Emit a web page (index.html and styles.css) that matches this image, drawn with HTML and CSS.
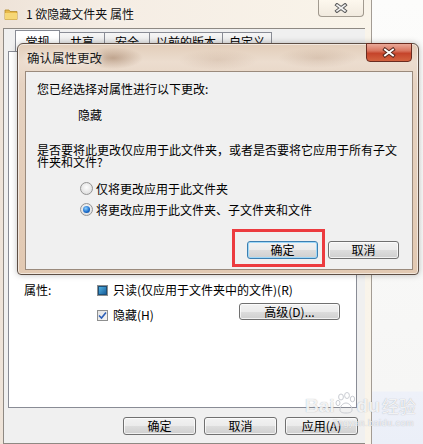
FILE: index.html
```html
<!DOCTYPE html>
<html lang="zh-CN">
<head>
    <meta charset="UTF-8">
    <title>确认属性更改</title>
    <link rel="stylesheet" href="styles.css">
</head>
<body>
<div class="desktop">

    <!-- background window: folder properties -->
    <div class="window props">
        <div class="titlebar">
            <svg class="folder-icon" width="14" height="14" viewBox="0 0 14 14">
                <path d="M1 3h4l1 1.5h7v8H1z" fill="#e8b948" stroke="#b48a2a" stroke-width="0.8"/>
                <path d="M1 6h12v6.5H1z" fill="#f6d776"/>
            </svg>
            <span class="title">1 欲隐藏文件夹 属性</span>
            <div class="close-btn">
                <svg width="14" height="10" viewBox="0 0 14 10">
                    <path d="M3 2L11 8M11 2L3 8" stroke="#5c5c5c" stroke-width="3.6" stroke-linecap="square"/>
                    <path d="M3 2L11 8M11 2L3 8" stroke="#f4f4f4" stroke-width="1.6" stroke-linecap="square"/>
                </svg>
            </div>
        </div>
        <div class="client">
            <div class="tabs">
                <div class="tab active">常规</div>
                <div class="tab">共享</div>
                <div class="tab">安全</div>
                <div class="tab wide">以前的版本</div>
                <div class="tab">自定义</div>
            </div>
            <div class="tab-panel">
                <div class="attr">
                    <span class="attr-label">属性:</span>
                    <div class="attr-opts">
                        <div class="check-row">
                            <span class="box partial"></span>
                            <span>只读(仅应用于文件夹中的文件)(R)</span>
                        </div>
                        <div class="check-row second">
                            <div class="check-item">
                                <span class="box checked">
                                    <svg width="9" height="9" viewBox="0 0 9 9"><path d="M1 4.5L3.5 7L8 1.5" fill="none" stroke="#2c5fb8" stroke-width="1.6"/></svg>
                                </span>
                                <span>隐藏(H)</span>
                            </div>
                            <button class="btn adv">高级(D)...</button>
                        </div>
                    </div>
                </div>
            </div>
            <div class="footer">
                <button class="btn">确定</button>
                <button class="btn">取消</button>
                <button class="btn">应用(A)</button>
            </div>
        </div>
    </div>

    <!-- confirm dialog -->
    <div class="window dialog">
        <div class="titlebar">
            <span class="title">确认属性更改</span>
            <div class="close-btn red">
                <svg width="16" height="11" viewBox="0 0 16 11">
                    <path d="M4 2.5L12 8.5M12 2.5L4 8.5" stroke="#5a2a20" stroke-width="3.8" stroke-linecap="square"/>
                    <path d="M4 2.5L12 8.5M12 2.5L4 8.5" stroke="#ffffff" stroke-width="1.8" stroke-linecap="square"/>
                </svg>
            </div>
        </div>
        <div class="dlg-client">
            <p class="line first">您已经选择对属性进行以下更改:</p>
            <p class="line change">隐藏</p>
            <p class="question">是否要将此更改仅应用于此文件夹，或者是否要将它应用于所有子文件夹和文件?</p>
            <div class="radio-row first">
                <span class="radio"></span>
                <span>仅将更改应用于此文件夹</span>
            </div>
            <div class="radio-row">
                <span class="radio on"></span>
                <span>将更改应用于此文件夹、子文件夹和文件</span>
            </div>
            <div class="dlg-buttons">
                <button class="btn default">确定</button>
                <button class="btn">取消</button>
            </div>
        </div>
    </div>

    <div class="highlight"></div>

    <div class="watermark">
        <div class="wm-logo">
            <span>Bai</span>
            <svg width="22" height="22" viewBox="0 0 22 22">
                <g fill="none" stroke="#c9ccd2" stroke-width="1">
                    <ellipse cx="6" cy="5" rx="2.4" ry="3"/>
                    <ellipse cx="12" cy="3.5" rx="2.4" ry="3"/>
                    <ellipse cx="17.5" cy="7" rx="2.2" ry="2.8"/>
                    <ellipse cx="3" cy="11" rx="2" ry="2.6"/>
                    <path d="M5 18c0-4 3-7 6-7s6 3 6 7c0 2-2 3-6 3s-6-1-6-3z"/>
                </g>
            </svg>
            <span>du</span>
            <span class="wm-cn">经验</span>
        </div>
        <div class="wm-url">jingyan.baidu.com</div>
    </div>

</div>
</body>
</html>
```

FILE: styles.css
```css
* { box-sizing: border-box; }
body {
    margin: 0;
    font-family: "Noto Sans CJK SC", "Noto Sans", sans-serif;
    font-size: 12px;
    color: #000;
}
p { margin: 0; }
.desktop {
    position: relative;
    width: 423px;
    height: 444px;
    overflow: hidden;
    background: linear-gradient(#fcfcfb 0, #f6f6f5 391px, #eef1f9 392px, #ebeff8 100%);
}

/* windows */
.window { position: absolute; }
.titlebar { display: flex; align-items: center; }
.title { line-height: 14px; color: #111; text-shadow: 0 0 6px rgba(255,255,255,.9); }
.close-btn {
    margin-left: auto;
    align-self: flex-start;
    display: flex;
    align-items: center;
    justify-content: center;
    width: 46px;
    border: 1px solid rgba(90,80,70,.55);
    border-top: none;
    border-radius: 0 0 4px 4px;
}

.props {
    left: -5px;
    top: 0;
    width: 377px;
    height: 470px;
    padding: 0 6px 0 7px;
    border: 1px solid #a39c94;
    border-top: none;
    background: linear-gradient(90deg, #eee3d8 0, #f5ede4 30%, #f9f4ea 100%);
}
.props .titlebar { height: 28px; }
.props .close-btn {
    height: 17px;
    margin-right: 1px;
    background: linear-gradient(#fdf8ee, #f1eadf);
}
.folder-icon { margin: 0 8px 0 1px; }

.client {
    height: 416px;
    background: #f0f0f0;
    border-left: 1px solid #8e8983;
    border-top: 1px solid #8e8983;
    border-bottom: 1px solid #8e8983;
}
.tabs {
    display: flex;
    align-items: flex-end;
    height: 21px;
    margin-top: 1px;
    padding-left: 11px;
}
.tab {
    min-width: 46px;
    height: 19px;
    padding: 2px 6px 0;
    text-align: center;
    line-height: 14px;
    border: 1px solid #898c95;
    border-bottom: none;
    margin-right: -1px;
    background: linear-gradient(#f6f6f6, #e3e3e3);
}
.tab.active { height: 21px; min-width: 45px; padding-top: 4px; background: #fff; }
.tab.wide { min-width: 73px; }
.tab-panel {
    height: 357px;
    margin: 0 8px 0 4px;
    padding: 231px 16px 0 15px;
    background: #fff;
    border: 1px solid #898c95;
}
.attr { display: flex; }
.attr-label { width: 73px; line-height: 14px; }
.attr-opts { flex: 1; }
.check-row { display: flex; align-items: center; height: 14px; line-height: 14px; }
.check-row.second { align-items: flex-start; height: auto; margin-top: 6px; }
.check-item { display: flex; align-items: center; margin-top: 5px; line-height: 14px; }
.box {
    display: flex;
    align-items: center;
    justify-content: center;
    width: 11px;
    height: 11px;
    margin-right: 5px;
    border: 1px solid #8e8f8f;
    background: linear-gradient(135deg, #dcdcdc, #fafafa);
}
.box.partial::after {
    content: "";
    width: 7px;
    height: 7px;
    background: linear-gradient(135deg, #4fb0e0, #1a5f9c);
    border: 1px solid #1d4f78;
}
.box.checked { background: linear-gradient(135deg, #e4e4e4, #f4f4f4); }
.adv { margin-left: auto; width: 101px; height: 17px; }
.footer {
    display: flex;
    justify-content: flex-end;
    gap: 8px;
    padding: 9px 7px 0 0;
}
.footer .btn { width: 73px; height: 18px; }

/* buttons */
.btn {
    font: inherit;
    font-size: 12px;
    line-height: 14px;
    padding: 0;
    color: #000;
    border: 1px solid #707070;
    border-radius: 3px;
    background: linear-gradient(#f2f2f2 0, #ebebeb 50%, #dddddd 51%, #cfcfcf 100%);
    box-shadow: inset 0 0 0 1px rgba(255,255,255,.7);
}
.btn.default {
    border-color: #3c7fb1;
    box-shadow: inset 0 0 0 1px #9fd8f8;
}

/* confirm dialog */
.dialog {
    left: 17px;
    top: 43px;
    width: 402px;
    height: 232px;
    padding: 0 5px 4px 7px;
    border: 1px solid #5d4e44;
    border-radius: 6px 6px 4px 4px;
    background:
        radial-gradient(ellipse 30px 11px at 95px 14px, rgba(140,100,70,.45), transparent),
        radial-gradient(ellipse 40px 10px at 200px 16px, rgba(160,120,90,.18), transparent),
        radial-gradient(ellipse 40px 10px at 300px 14px, rgba(150,110,80,.2), transparent),
        linear-gradient(180deg, #e2cdb9 0, #ecddcf 18px, #e6d3c2 40px, #e2c9b2 100%);
    box-shadow: inset 0 0 0 1px rgba(255,255,255,.55), 0 0 6px rgba(0,0,0,.25);
}
.dialog .titlebar { height: 27px; padding-left: 2px; }
.dialog .title { font-size: 12.5px; color: #1a1a1a; }
.close-btn.red {
    height: 19px;
    margin-top: -1px;
    margin-right: 1px;
    border: 1px solid #6a2b1f;
    background: linear-gradient(#eaa999 0, #d9755f 40%, #c5442b 55%, #d3623f 100%);
}
.dlg-client {
    height: 199px;
    padding-left: 11px;
    background: #f0f0f0;
    border: 1px solid #9a8a7c;
}
.line { line-height: 12px; }
.line.first { margin-top: 11px; }
.line.change { margin: 14px 0 0 41px; }
.question { margin-top: 23px; line-height: 12px; padding-right: 5px; }
.radio-row { display: flex; align-items: center; gap: 3px; height: 14px; margin: 7px 0 0 43px; }
.radio-row.first { margin-top: 13px; }
.radio {
    display: flex;
    align-items: center;
    justify-content: center;
    width: 13px;
    height: 13px;
    border-radius: 50%;
    border: 1px solid #959595;
    background: radial-gradient(circle at 50% 40%, #fdfdfd, #d6d6d6);
}
.radio.on::after {
    content: "";
    width: 7px;
    height: 7px;
    border-radius: 50%;
    background: radial-gradient(circle at 40% 35%, #8fd2ff, #1668c8 60%, #0b3d86);
}
.dlg-buttons {
    display: flex;
    justify-content: flex-end;
    gap: 10px;
    margin-top: 25px;
    padding-right: 13px;
}
.dlg-buttons .btn { width: 71px; height: 18px; }

/* red annotation box */
.highlight {
    position: absolute;
    left: 232px;
    top: 229px;
    width: 93px;
    height: 38px;
    border: 3px solid #ec3b3f;
}

/* watermark */
.watermark {
    position: absolute;
    left: 305px;
    top: 392px;
    color: rgba(255,255,255,.85);
    text-shadow: 0 0 1px rgba(110,115,125,.6);
    font-family: "Liberation Sans", sans-serif;
}
.wm-logo { display: flex; align-items: flex-end; font-size: 19px; line-height: 20px; font-weight: bold; }
.wm-logo svg { margin-bottom: 2px; }
.wm-cn { font-family: "Noto Sans CJK SC", sans-serif; font-size: 17px; font-weight: normal; margin-left: 2px; }
.wm-url { font-size: 9px; margin: 2px 0 0 28px; letter-spacing: .5px; }
```
